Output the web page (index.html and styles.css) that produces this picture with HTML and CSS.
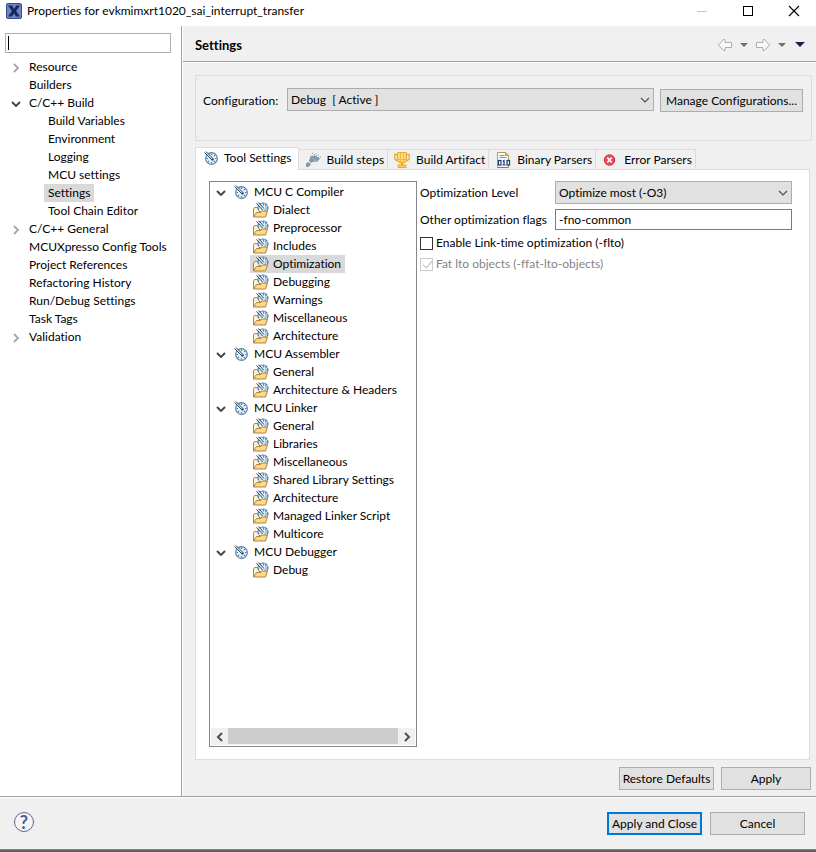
FILE: index.html
```html
<!DOCTYPE html>
<html lang="en">
<head>
  <meta charset="UTF-8">
  <title>Properties for evkmimxrt1020_sai_interrupt_transfer</title>
  <link rel="stylesheet" href="styles.css">
</head>
<body>

<!-- Icons shared by the trees, tabs and drop-downs -->
<svg class="sprite" aria-hidden="true">
  <symbol id="i-open" viewBox="0 0 10 10"><path d="M1 3l4 4 4-4" fill="none" stroke="#404040" stroke-width="1.8"/></symbol>
  <symbol id="i-closed" viewBox="0 0 10 10"><path d="M3 1l4 4-4 4" fill="none" stroke="#a6a6a6" stroke-width="1.8"/></symbol>
  <symbol id="i-down" viewBox="0 0 10 10"><path d="M1 3l4 4 4-4" fill="none" stroke="#505050" stroke-width="1.2"/></symbol>
  <symbol id="i-gauge" viewBox="0 0 14 14">
    <circle cx="7.5" cy="7.5" r="5.8" fill="#e6f1f8" stroke="#5b83a1" stroke-width="1.2"/>
    <path d="M7.5 2.5V4M12.5 7.5H11M7.5 12.5V11M2.5 7.5H4M11 4l-1 1M11 11l-1-1M4 11l1-1" stroke="#3f86bb" stroke-width="1.2"/>
    <path d="M1.500 1.500l7 7" stroke="#dde7ee" stroke-width="2"/>
    <path d="M.5 1.500l7.500 7.500M2 .5l7 7" stroke="#2b4760" stroke-width="1"/>
    <circle cx="8.500" cy="8.500" r="1.200" fill="#28506f"/>
  </symbol>
  <symbol id="i-folder" viewBox="0 0 16 16">
    <path d="M.5 14.500V7l1-1.500h3l1 2H10v7z" fill="#fff3cf" stroke="#b58138"/>
    <circle cx="10" cy="6" r="4.900" fill="#e6f1f8" stroke="#4a7da4" stroke-width="1.200" stroke-dasharray="2.500 .6"/>
    <path d="M10.500 2v1.500M14 6h-1.500M13 3.500l-1 .8M12.800 8.500l-1-.8" stroke="#3c83ba" stroke-width="1.100"/>
    <path d="M4.500 1l6 6.500" stroke="#dde7ee" stroke-width="2"/>
    <path d="M3.500 1.500l6 6.500M5.500.5l5.500 6" stroke="#2b4760" stroke-width="1"/>
    <path d="M.5 15l3-4.500h4l1.500-1.500h5.500l-2 6z" fill="#fbd98b" stroke="#b58138"/>
  </symbol>
</svg>

<header class="titlebar">
  <svg class="app-icon" viewBox="0 0 16 16">
    <rect x=".5" y=".5" width="15" height="15" rx="1.500" fill="#6f83c4" stroke="#38498a"/>
    <path d="M2 2.500h4L8 6l2.300-3.500H14L10 8l4 5.500h-4L8 10.300 6 13.500H2L6 8z" fill="#142858"/>
  </svg>
  <span class="window-title">Properties for evkmimxrt1020_sai_interrupt_transfer</span>
  <div class="window-buttons">
    <button aria-label="Minimize"><svg viewBox="0 0 12 12"><path d="M1 6.500h10" stroke="#c4c4c4"/></svg></button>
    <button aria-label="Maximize"><svg viewBox="0 0 12 12"><rect x="1.500" y="1.500" width="9" height="9" fill="none" stroke="#000"/></svg></button>
    <button aria-label="Close"><svg viewBox="0 0 12 12"><path d="M1 1l10 10M11 1L1 11" stroke="#000" stroke-width="1.100"/></svg></button>
  </div>
</header>

<div class="dialog">
  <nav class="sidebar">
    <div class="search">
      <input type="text" aria-label="Filter">
      <span class="caret"></span>
    </div>
    <ul class="tree pages">
      <li><div class="row"><svg class="twisty"><use href="#i-closed"/></svg><span>Resource</span></div></li>
      <li><div class="row leaf"><span>Builders</span></div></li>
      <li><div class="row"><svg class="twisty"><use href="#i-open"/></svg><span>C/C++ Build</span></div>
        <ul>
          <li><div class="row"><span>Build Variables</span></div></li>
          <li><div class="row"><span>Environment</span></div></li>
          <li><div class="row"><span>Logging</span></div></li>
          <li><div class="row"><span>MCU settings</span></div></li>
          <li><div class="row"><span class="selected">Settings</span></div></li>
          <li><div class="row"><span>Tool Chain Editor</span></div></li>
        </ul>
      </li>
      <li><div class="row"><svg class="twisty"><use href="#i-closed"/></svg><span>C/C++ General</span></div></li>
      <li><div class="row leaf"><span>MCUXpresso Config Tools</span></div></li>
      <li><div class="row leaf"><span>Project References</span></div></li>
      <li><div class="row leaf"><span>Refactoring History</span></div></li>
      <li><div class="row leaf"><span>Run/Debug Settings</span></div></li>
      <li><div class="row leaf"><span>Task Tags</span></div></li>
      <li><div class="row"><svg class="twisty"><use href="#i-closed"/></svg><span>Validation</span></div></li>
    </ul>
  </nav>

  <main class="content">
    <div class="page-header">
      <h1>Settings</h1>
      <div class="history">
        <button aria-label="Back"><svg width="16" height="14" viewBox="0 0 16 14"><path d="M1.500 7l5-5.500h1.500v3h6.500v5H8v3H6.500z" fill="#fafafa" stroke="#ababab"/></svg></button>
        <button aria-label="Back history"><svg width="8" height="4" viewBox="0 0 8 4"><path d="M0 0h8L4 4z" fill="#707070"/></svg></button>
        <button aria-label="Forward"><svg width="16" height="14" viewBox="0 0 16 14"><path d="M14.500 7l-5-5.500H8v3H1.500v5H8v3h1.500z" fill="#fafafa" stroke="#ababab"/></svg></button>
        <button aria-label="Forward history"><svg width="8" height="4" viewBox="0 0 8 4"><path d="M0 0h8L4 4z" fill="#707070"/></svg></button>
        <button class="menu" aria-label="Menu"><svg width="10" height="5" viewBox="0 0 10 5"><path d="M0 0h10L5 5z" fill="#2a1a4a"/></svg></button>
      </div>
    </div>

    <section class="configuration">
      <label for="config">Configuration:</label>
      <div class="dropdown">
        <select id="config"><option>Debug &nbsp;[ Active ]</option></select>
        <svg><use href="#i-down"/></svg>
      </div>
      <button class="btn manage">Manage Configurations...</button>
    </section>

    <div class="tabs" role="tablist">
      <button class="tab active" role="tab" aria-selected="true">
        <svg viewBox="0 0 14 14"><use href="#i-gauge"/></svg>Tool Settings
      </button>
      <button class="tab" role="tab">
        <svg viewBox="0 0 16 16">
          <path d="M5.500 4l6.500 6 3-3.500-5-3z" fill="#7f98aa"/>
          <path d="M5.500 4l5.500 5.500-3.500.5-1.500 1-2-2z" fill="#7f98aa"/>
          <path d="M1 15v-3.500L3.500 10 6 12.500 3.500 15z" fill="#7f98aa"/>
          <path d="M7 2l2-1.500M9 3l2.500-1.500M11 4.200l3-1.500M13 5.500l3-.5" stroke="#7894a8" stroke-dasharray="1 1"/>
        </svg>Build steps
      </button>
      <button class="tab" role="tab">
        <svg viewBox="0 0 16 16">
          <path d="M4 2.500H.8V7l1.700 1.500H5M12 2.500h3.200V7l-1.700 1.500H11" fill="none" stroke="#edaa2a" stroke-width="1.300"/>
          <path d="M3.500 1.200l1-.7h7l1 .7V8.500L10.500 10.500h-5l-2-2z" fill="#fbdc84" stroke="#edaa2a" stroke-width="1.200"/>
          <path d="M6.500 1v9M9.500 1v9M4 7.500h8" stroke="#f3b840"/>
          <path d="M6.700 11h2.600v2.500H6.700z" fill="#edaa2a"/>
          <rect x="4.200" y="13" width="7.600" height="2.500" fill="#fbd15a" stroke="#edaa2a"/>
        </svg>Build Artifact
      </button>
      <button class="tab" role="tab">
        <svg viewBox="0 0 16 16">
          <path d="M2.500.5h8l3 3v12h-11z" fill="#f8fbff" stroke="#b59a52"/>
          <path d="M10.500.5v3h3z" fill="#f4ca62" stroke="#b59a52"/>
          <path d="M4.500 3.500h5M4.500 5.500h7" stroke="#6d95cf"/>
          <path d="M2.500 15.500h11" stroke="#6079ae"/>
          <rect x="3.500" y="8.500" width="2.500" height="4.500" fill="#fff" stroke="#1b3e72" stroke-width="1.200"/>
          <path d="M7.800 9.300L9 8.500V13M7.500 13h3" fill="none" stroke="#1b3e72" stroke-width="1.200"/>
          <rect x="12" y="8.500" width="2.500" height="4.500" fill="#fff" stroke="#1b3e72" stroke-width="1.200"/>
        </svg>Binary Parsers
      </button>
      <button class="tab" role="tab">
        <svg viewBox="0 0 16 16">
          <circle cx="7.500" cy="8" r="5.200" fill="#e84c58" stroke="#d52839"/>
          <path d="M5.300 5.500l4.400 5M9.700 5.500l-4.400 5" stroke="#fff" stroke-width="1.700"/>
        </svg>Error Parsers
      </button>
    </div>

    <section class="panel">
      <div class="options">
        <ul class="tree">
          <li><div class="row"><svg class="twisty"><use href="#i-open"/></svg><svg class="gauge"><use href="#i-gauge"/></svg><span>MCU C Compiler</span></div>
            <ul>
              <li><div class="row"><svg class="folder"><use href="#i-folder"/></svg><span>Dialect</span></div></li>
              <li><div class="row"><svg class="folder"><use href="#i-folder"/></svg><span>Preprocessor</span></div></li>
              <li><div class="row"><svg class="folder"><use href="#i-folder"/></svg><span>Includes</span></div></li>
              <li><div class="row selected"><svg class="folder"><use href="#i-folder"/></svg><span>Optimization</span></div></li>
              <li><div class="row"><svg class="folder"><use href="#i-folder"/></svg><span>Debugging</span></div></li>
              <li><div class="row"><svg class="folder"><use href="#i-folder"/></svg><span>Warnings</span></div></li>
              <li><div class="row"><svg class="folder"><use href="#i-folder"/></svg><span>Miscellaneous</span></div></li>
              <li><div class="row"><svg class="folder"><use href="#i-folder"/></svg><span>Architecture</span></div></li>
            </ul>
          </li>
          <li><div class="row"><svg class="twisty"><use href="#i-open"/></svg><svg class="gauge"><use href="#i-gauge"/></svg><span>MCU Assembler</span></div>
            <ul>
              <li><div class="row"><svg class="folder"><use href="#i-folder"/></svg><span>General</span></div></li>
              <li><div class="row"><svg class="folder"><use href="#i-folder"/></svg><span>Architecture &amp; Headers</span></div></li>
            </ul>
          </li>
          <li><div class="row"><svg class="twisty"><use href="#i-open"/></svg><svg class="gauge"><use href="#i-gauge"/></svg><span>MCU Linker</span></div>
            <ul>
              <li><div class="row"><svg class="folder"><use href="#i-folder"/></svg><span>General</span></div></li>
              <li><div class="row"><svg class="folder"><use href="#i-folder"/></svg><span>Libraries</span></div></li>
              <li><div class="row"><svg class="folder"><use href="#i-folder"/></svg><span>Miscellaneous</span></div></li>
              <li><div class="row"><svg class="folder"><use href="#i-folder"/></svg><span>Shared Library Settings</span></div></li>
              <li><div class="row"><svg class="folder"><use href="#i-folder"/></svg><span>Architecture</span></div></li>
              <li><div class="row"><svg class="folder"><use href="#i-folder"/></svg><span>Managed Linker Script</span></div></li>
              <li><div class="row"><svg class="folder"><use href="#i-folder"/></svg><span>Multicore</span></div></li>
            </ul>
          </li>
          <li><div class="row"><svg class="twisty"><use href="#i-open"/></svg><svg class="gauge"><use href="#i-gauge"/></svg><span>MCU Debugger</span></div>
            <ul>
              <li><div class="row"><svg class="folder"><use href="#i-folder"/></svg><span>Debug</span></div></li>
            </ul>
          </li>
        </ul>
        <div class="scrollbar">
          <button aria-label="Scroll left"><svg viewBox="0 0 10 10"><path d="M7 1L3 5l4 4" fill="none" stroke="#505050" stroke-width="2"/></svg></button>
          <div class="thumb"></div>
          <button aria-label="Scroll right"><svg viewBox="0 0 10 10"><path d="M3 1l4 4-4 4" fill="none" stroke="#505050" stroke-width="2"/></svg></button>
        </div>
      </div>

      <form class="fields">
        <label for="level">Optimization Level</label>
        <div class="dropdown">
          <select id="level"><option>Optimize most (-O3)</option></select>
          <svg><use href="#i-down"/></svg>
        </div>
        <label for="flags">Other optimization flags</label>
        <input id="flags" type="text" value="-fno-common">
        <label class="check"><input type="checkbox">Enable Link-time optimization (-flto)</label>
        <label class="check disabled"><input type="checkbox" checked disabled>Fat lto objects (-ffat-lto-objects)</label>
      </form>
    </section>

    <div class="page-buttons">
      <button class="btn">Restore Defaults</button>
      <button class="btn apply">Apply</button>
    </div>
  </main>
</div>

<footer class="footer">
  <button class="help" aria-label="Help">?</button>
  <div class="footer-buttons">
    <button class="btn primary">Apply and Close</button>
    <button class="btn">Cancel</button>
  </div>
</footer>

</body>
</html>
```
FILE: styles.css
```css
* {
  margin: 0;
  padding: 0;
  box-sizing: border-box;
}

body {
  min-height: 100vh;
  display: flex;
  flex-direction: column;
  font-family: Lato, "Open Sans", sans-serif;
  font-size: 12px;
  line-height: 18px;
  font-variant-ligatures: none;
  color: #000;
  background: #f0f0f0;
  white-space: nowrap;
}

button, input, select {
  font: inherit;
  font-variant-ligatures: none;
  color: inherit;
  border-radius: 0;
}

button {
  border: none;
  background: none;
}

svg {
  display: block;
  flex: none;
}

ul {
  list-style: none;
}

.sprite {
  position: absolute;
  width: 0;
  height: 0;
}

/* title bar */
.titlebar {
  display: flex;
  align-items: center;
  height: 26px;
  padding: 0 0 5px 6px;
  background: #fff;
}

.app-icon {
  width: 16px;
  height: 16px;
  margin-right: 5px;
}

.window-buttons {
  display: flex;
  margin: 0 -1px 0 auto;
}

.window-buttons button {
  width: 46px;
  height: 20px;
  display: flex;
  align-items: center;
  justify-content: center;
}

.window-buttons svg {
  width: 12px;
  height: 12px;
}

/* page tree */
.dialog {
  flex: 1;
  display: flex;
}

.sidebar {
  width: 182px;
  flex: none;
  padding-top: 7px;
  background: #fff;
  border-right: 1px solid #a0a0a0;
}

.search {
  position: relative;
  margin: 0 10px 5px 5px;
}

.search input {
  display: block;
  width: 100%;
  height: 20px;
  padding: 0 3px;
  border: 1px solid #abadb3;
  outline: none;
}

.caret {
  position: absolute;
  left: 3px;
  top: 3px;
  width: 1px;
  height: 14px;
  background: #000;
}

.row {
  display: flex;
  align-items: center;
  height: 18px;
}

.twisty {
  width: 10px;
  height: 10px;
}

.pages .twisty {
  margin: 2px 4px 0 11px;
}

.pages .row span {
  padding: 0 4px;
}

.pages .leaf {
  padding-left: 25px;
}

.pages ul .row {
  padding-left: 44px;
}

.selected {
  background: #d9d9d9;
}

/* settings page */
.content {
  flex: 1;
  display: flex;
  flex-direction: column;
  border-left: 1px solid #fff;
}

.page-header {
  display: flex;
  align-items: center;
  justify-content: space-between;
  height: 36px;
  padding: 2px 11px 0 12px;
  border-bottom: 1px solid #a0a0a0;
  box-shadow: 0 1px #fff;
}

h1 {
  font-size: 13px;
  line-height: 18px;
}

.history {
  display: flex;
  align-items: center;
  gap: 7px;
}

.history .menu {
  margin-left: 2px;
}

.configuration {
  display: flex;
  gap: 6px;
  height: 66px;
  margin: 13px 4px 0 12px;
  padding: 12px 8px 0 7px;
  border: 1px solid #dcdcdc;
}

.configuration label {
  width: 78px;
  padding-top: 4px;
}

.configuration .dropdown {
  flex: 1;
}

.dropdown {
  position: relative;
}

.dropdown select {
  display: block;
  appearance: none;
  width: 100%;
  height: 23px;
  padding: 0 20px 0 3px;
  border: 1px solid #adadad;
  background: #e1e1e1;
}

.dropdown svg {
  position: absolute;
  right: 4px;
  top: 7px;
  width: 10px;
  height: 10px;
  pointer-events: none;
}

.btn {
  min-width: 95px;
  height: 23px;
  padding: 0 2px;
  line-height: 21px;
  border: 1px solid #adadad;
  background: #e1e1e1;
}

.manage {
  width: 143px;
  margin-top: 1px;
}

.tabs {
  display: flex;
  align-items: flex-end;
  height: 23px;
  margin: 6px 6px 0 12px;
}

.tab {
  display: flex;
  align-items: center;
  gap: 6px;
  height: 21px;
  padding: 0 3px 0 6px;
  border: 1px solid #dcdcdc;
  border-left: none;
}

.tab svg {
  width: 16px;
  height: 16px;
}

.tab.active {
  position: relative;
  height: 23px;
  padding: 0 6px 2px 8px;
  border-left: 1px solid #dcdcdc;
  border-bottom: none;
  background: #fff;
}

.tab.active svg {
  width: 14px;
  height: 14px;
}

.panel {
  flex: 1;
  display: flex;
  gap: 3px;
  margin: -1px 6px 0 12px;
  padding: 11px 17px 12px 13px;
  border: 1px solid #dcdcdc;
  background: #fff;
}

.options {
  width: 208px;
  flex: none;
  display: flex;
  flex-direction: column;
  padding: 1px;
  border: 1px solid #828790;
}

.options .tree {
  flex: 1;
}

.options .twisty {
  margin: 2px 8px 0 5px;
}

.gauge {
  width: 14px;
  height: 14px;
  margin-right: 6px;
}

.options ul ul .row {
  width: max-content;
  margin-left: 39px;
  padding: 0 4px 0 3px;
}

.folder {
  width: 16px;
  height: 16px;
  margin-right: 4px;
}

.scrollbar {
  display: flex;
  height: 17px;
  background: #f0f0f0;
}

.scrollbar button {
  width: 17px;
  display: flex;
  align-items: center;
  justify-content: center;
}

.scrollbar svg {
  width: 10px;
  height: 10px;
}

.thumb {
  flex: 1;
  margin-bottom: 1px;
  background: #cdcdcd;
}

/* optimization options */
.fields {
  flex: 1;
  display: grid;
  grid-template-columns: 130px 1fr;
  gap: 5px;
  align-content: start;
  align-items: center;
}

.fields input[type="text"] {
  width: 100%;
  height: 21px;
  padding: 0 3px;
  border: 1px solid #7a7a7a;
}

.check {
  grid-column: 1 / -1;
  display: flex;
  align-items: center;
  gap: 3px;
  height: 16px;
}

.check input {
  appearance: none;
  width: 13px;
  height: 13px;
  border: 1px solid #333;
  background: #fff;
}

.disabled {
  color: #838383;
}

.disabled input {
  border-color: #ccc;
}

.disabled input::before {
  content: "";
  display: block;
  width: 4px;
  height: 8px;
  margin: 0 0 0 4px;
  border: solid #bbb;
  border-width: 0 1px 1px 0;
  transform: rotate(40deg);
}

.page-buttons {
  display: flex;
  justify-content: flex-end;
  gap: 7px;
  padding: 7px 5px 6px;
}

.apply {
  min-width: 90px;
}

/* dialog footer */
.footer {
  display: flex;
  align-items: center;
  justify-content: space-between;
  height: 56px;
  padding: 0 11px 0 14px;
  border-top: 1px solid #a0a0a0;
  border-bottom: 2px solid #606060;
  box-shadow: inset 0 1px #fff, inset 0 -1px #c86464;
}

.help {
  width: 20px;
  height: 20px;
  margin-bottom: 3px;
  border: 1px solid #5a6c91;
  border-radius: 50%;
  background: #f5f5f5;
  color: #4a5f8a;
  font-size: 18px;
  font-weight: bold;
  line-height: 18px;
}

.footer-buttons {
  display: flex;
  gap: 8px;
}

.primary {
  border: 2px solid #0078d7;
  padding: 0 3px;
  line-height: 19px;
}
```
